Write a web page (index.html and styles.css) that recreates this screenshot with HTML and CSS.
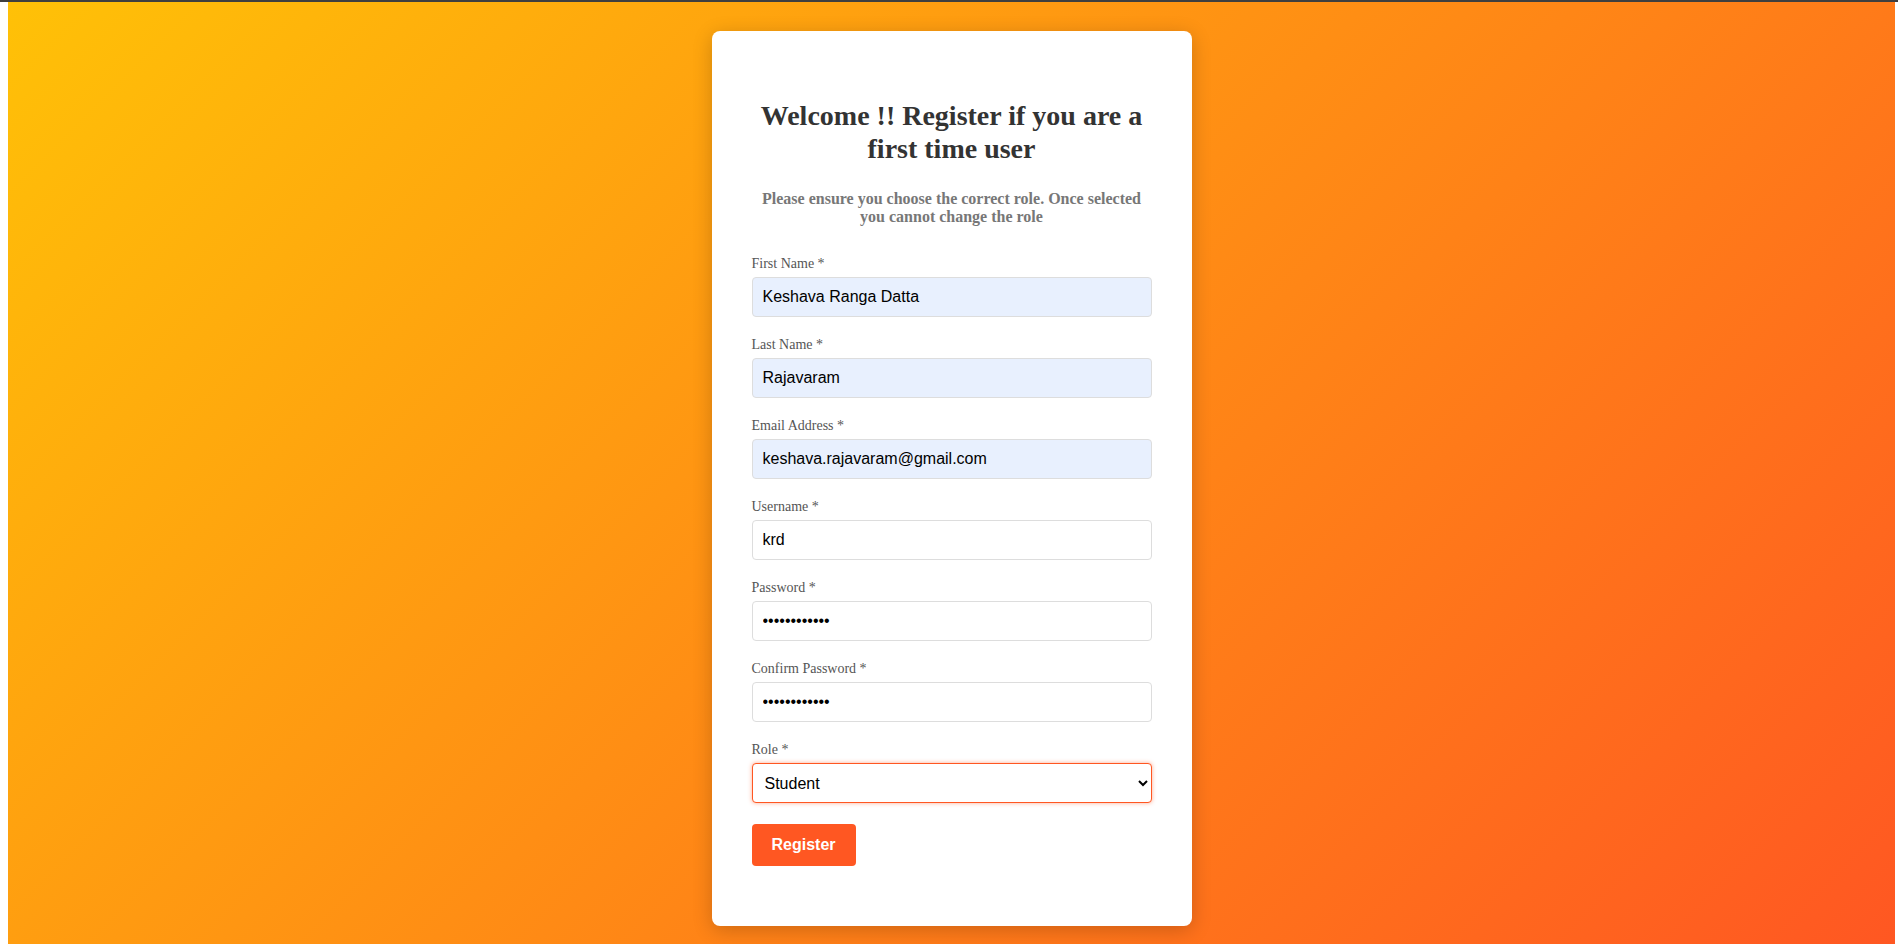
FILE: index.html
```html
<!DOCTYPE html>
<html lang="en">
<head>
<meta charset="utf-8">
<title>Register</title>
<link rel="stylesheet" href="styles.css">
</head>
<body>
<div class="topline"></div>
<div class="page">
  <div class="card">
    <h2 class="title">Welcome !! Register if you are a first time user</h2>
    <h4 class="subtitle">Please ensure you choose the correct role. Once selected you cannot change the role</h4>
    <form class="form">
      <div class="field">
        <label class="label">First Name *</label>
        <input class="input filled" type="text" value="Keshava Ranga Datta">
      </div>
      <div class="field">
        <label class="label">Last Name *</label>
        <input class="input filled" type="text" value="Rajavaram">
      </div>
      <div class="field">
        <label class="label">Email Address *</label>
        <input class="input filled" type="email" value="keshava.rajavaram@gmail.com">
      </div>
      <div class="field">
        <label class="label">Username *</label>
        <input class="input" type="text" value="krd">
      </div>
      <div class="field">
        <label class="label">Password *</label>
        <input class="input" type="password" value="abcdefghijkl">
      </div>
      <div class="field">
        <label class="label">Confirm Password *</label>
        <input class="input" type="password" value="abcdefghijkl">
      </div>
      <div class="field">
        <label class="label">Role *</label>
        <select class="input select">
          <option>Student</option>
          <option>Teacher</option>
        </select>
      </div>
      <button class="button" type="button">Register</button>
    </form>
  </div>
</div>
</body>
</html>
```
FILE: styles.css
```css
html, body {
  margin: 0;
  padding: 0;
  background: #ffffff;
}
body {
  font-family: "Liberation Serif", "Times New Roman", serif;
}
.topline {
  height: 2px;
  background: #3f3f3f;
}
.page {
  margin: 0 3px 0 8px;
  height: 942px;
  background: linear-gradient(135deg, #ffc107 0%, #ff5722 100%);
  display: flex;
  justify-content: center;
  align-items: flex-start;
  padding-top: 29px;
  box-sizing: border-box;
}
.card {
  width: 480px;
  height: 895px;
  box-sizing: border-box;
  background: #ffffff;
  border-radius: 8px;
  box-shadow: 0 4px 20px rgba(0, 0, 0, 0.2);
  padding: 40px;
}
.title {
  margin: 28px 0 0 0;
  font-size: 28px;
  line-height: 33px;
  font-weight: bold;
  color: #333333;
  text-align: center;
}
.subtitle {
  margin: 25px 0 0 0;
  font-size: 16px;
  line-height: 18px;
  font-weight: bold;
  color: #777777;
  text-align: center;
}
.form {
  margin-top: 30px;
  display: flex;
  flex-direction: column;
  align-items: flex-start;
}
.field {
  width: 100%;
  margin-bottom: 20px;
}
.label {
  display: block;
  font-size: 14px;
  line-height: 16px;
  color: #555555;
  margin-bottom: 5px;
}
.input {
  display: block;
  width: 100%;
  height: 40px;
  box-sizing: border-box;
  padding: 0 10px;
  border: 1px solid #dddddd;
  border-radius: 4px;
  background: #ffffff;
  font-family: "Liberation Sans", Arial, sans-serif;
  font-size: 16px;
  color: #000000;
  outline: none;
}
.filled {
  background: #e8f0fe;
}
.select {
  border-color: #ff5722;
  box-shadow: 0 0 4px rgba(255, 87, 34, 0.5);
  padding: 0 8px;
}
.button {
  margin-top: 1px;
  height: 42px;
  padding: 0 20px;
  border: none;
  border-radius: 4px;
  background: #ff5722;
  color: #ffffff;
  font-family: "Liberation Sans", Arial, sans-serif;
  font-size: 16px;
  font-weight: bold;
  cursor: pointer;
}
```
